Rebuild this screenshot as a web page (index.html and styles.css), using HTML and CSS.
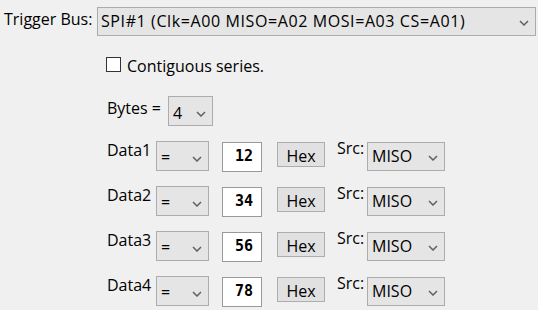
FILE: index.html
```html
<!DOCTYPE html>
<html lang="en">

<head>
  <meta charset="UTF-8">
  <title>Trigger Setup</title>
  <link rel="stylesheet" href="styles.css">
</head>

<body>
  <div class="bus-row">
    <span class="bus-label">Trigger Bus:</span>
    <div class="combo combo-bus">
      <span class="combo-text">SPI#1 (Clk=A00 MISO=A02 MOSI=A03 CS=A01)</span>
      <svg class="chev" viewBox="0 0 10 6"><path d="M1 1l4 4 4-4"/></svg>
    </div>
  </div>

  <div class="options">
    <label class="check-row"><span class="check-box"></span><span class="check-text">Contiguous series.</span></label>

    <div class="bytes-row">
      <span class="row-label">Bytes =</span>
      <div class="combo combo-bytes">
        <span class="combo-text">4</span>
        <svg class="chev" viewBox="0 0 10 6"><path d="M1 1l4 4 4-4"/></svg>
      </div>
    </div>

    <div class="data-rows" id="dataRows">
      <!-- data rows rendered here -->
    </div>
  </div>

  <script>
    const dataBytes = [
      { name: "Data1", op: "=", value: "12", src: "MISO" },
      { name: "Data2", op: "=", value: "34", src: "MISO" },
      { name: "Data3", op: "=", value: "56", src: "MISO" },
      { name: "Data4", op: "=", value: "78", src: "MISO" }
    ];

    const chevron = '<svg class="chev" viewBox="0 0 10 6"><path d="M1 1l4 4 4-4"/></svg>';

    function renderRows() {
      const list = document.getElementById("dataRows");
      dataBytes.forEach(d => {
        const el = document.createElement("div");
        el.className = "data-row";
        el.innerHTML = `
          <span class="data-label">${d.name}</span>
          <div class="combo combo-op"><span class="combo-text">${d.op}</span>${chevron}</div>
          <input class="value-box" type="text" value="${d.value}">
          <button class="hex-btn">Hex</button>
          <span class="src-label">Src:</span>
          <div class="combo combo-src"><span class="combo-text">${d.src}</span>${chevron}</div>
        `;
        list.appendChild(el);
      });
    }

    renderRows();
  </script>
</body>

</html>
```

FILE: styles.css
```css
* {
  box-sizing: border-box;
  margin: 0;
  padding: 0;
}

body {
  background: #f0f0f0;
  color: #000;
  font-family: 'Open Sans', 'Noto Sans', sans-serif;
  font-size: 16px;
  line-height: 20px;
  width: 538px;
  height: 310px;
  overflow: hidden;
}

/* combo boxes */
.combo {
  display: flex;
  align-items: flex-start;
  justify-content: space-between;
  height: 30px;
  background: #e5e5e5;
  border: 1px solid #acacac;
  padding: 3px 6px 0 4px;
}

.chev {
  width: 10px;
  height: 6px;
  align-self: center;
  fill: none;
  stroke: #606060;
  stroke-width: 1.5;
}

.bus-row {
  display: flex;
  align-items: flex-start;
  padding: 7px 0 0 4px;
}

.bus-label {
  width: 93px;
  padding-top: 2px;
}

.combo-bus {
  width: 439px;
  height: 29px;
  padding-left: 3px;
  padding-right: 6px;
  letter-spacing: 0.6px;
}

.options {
  padding: 21px 0 0 106px;
}

.check-row {
  display: flex;
  align-items: flex-start;
  height: 14px;
}

.check-box {
  width: 15px;
  height: 15px;
  background: #fff;
  border: 1px solid #333;
  margin-right: 6px;
}

.check-text {
  margin-top: -1px;
}

.bytes-row {
  display: flex;
  align-items: flex-start;
  margin-top: 25px;
}

.row-label {
  width: 62px;
  padding-top: 2px;
  padding-left: 1px;
}

.combo-bytes {
  width: 45px;
  padding-top: 6px;
}

.data-rows {
  display: flex;
  flex-direction: column;
  gap: 15px;
  margin-top: 15px;
}

.data-row {
  display: flex;
  align-items: flex-start;
  height: 30px;
}

.data-label {
  width: 50px;
  padding-left: 1px;
  margin-top: -1px;
}

.combo-op {
  width: 53px;
  padding-top: 5px;
}

.value-box {
  width: 40px;
  height: 30px;
  margin: 1px 0 0 13px;
  border: 1px solid #9a9a9a;
  background: #fff;
  font-family: 'DejaVu Sans Mono', monospace;
  font-weight: bold;
  font-size: 15px;
  text-align: center;
  padding: 0 0 3px 4px;
  outline: none;
}

.hex-btn {
  width: 48px;
  height: 25px;
  margin: 1px 0 0 15px;
  background: #e1e1e1;
  border: 1px solid #adadad;
  font-family: inherit;
  font-size: 16px;
  line-height: 20px;
  padding-top: 3px;
}

.src-label {
  width: 30px;
  margin: -3px 0 0 12px;
}

.combo-src {
  width: 78px;
  height: 29px;
  margin-top: 1px;
}
```
